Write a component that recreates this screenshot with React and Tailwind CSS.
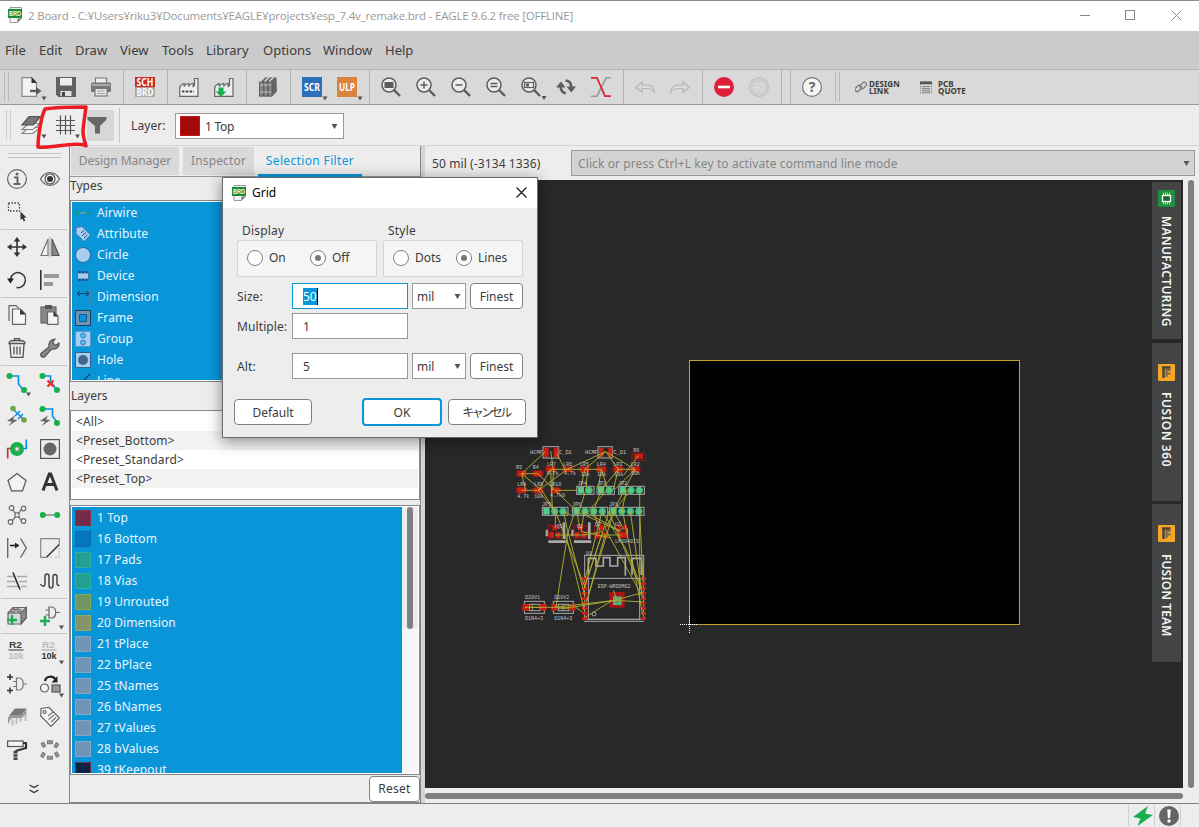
import React from "react";

const G = "#5c5c5c";

function Ico({ children, size = 20 }) {
  return (
    <svg width={size} height={size} viewBox="0 0 20 20" fill="none" stroke={G} strokeWidth="1.2" className="block shrink-0 overflow-visible">
      {children}
    </svg>
  );
}

function Arrow({ x = 21, y = 19.5 }) {
  return <path d={`M${x} ${y}h5l-2.500 4z`} transform="translate(-.5 0)" fill="#555" stroke="none" />;
}

function SheetIcon({ size = 16 }) {
  return (
    <svg width={size} height={size} viewBox="0 0 16 16" className="block shrink-0">
      <path d="M3 .5h11.500v11l-4 4H3z" fill="#f4f4f4" stroke="#999" />
      <path d="M14.500 11.500h-4v4z" fill="#777" />
      <rect x="1" y="2" width="14" height="9" fill="#1c8a3c" />
      <text x="8" y="9.300" fontSize="7.600" fontWeight="bold" fill="#e8ffe8" textAnchor="middle" textLength="12" lengthAdjust="spacingAndGlyphs" fontFamily="Liberation Sans">BRD</text>
    </svg>
  );
}

/* ---------- top toolbar ---------- */

function Lens({ children }) {
  return (
    <Ico>
      <circle cx="8" cy="8" r="7" fill="#ececec" strokeWidth="1.500" />
      <path d="M13 13l6 6" strokeWidth="2.400" />
      {children}
    </Ico>
  );
}

function Factory({ down }) {
  return (
    <Ico>
      <path d="M.7 19.300V10.500C1.500 8 3.500 7 5.200 6.500v3c.8-1.800 2.500-2.800 4.500-3v3c.8-1.800 2.500-2.800 4.500-3v3l1.300-1V1.500h3.500V19.300z" fill="#eee" stroke="#666" />
      {!down && <path d="M3 14.500h12" stroke="#444" strokeWidth="1.800" strokeDasharray="2.500 1.300" />}
      {down && <path d="M4.500 10.500h5v4h3L7 19.800 1.500 14.500h3z" fill="#18b04c" stroke="none" />}
    </Ico>
  );
}

function Badge({ fill, label }) {
  return (
    <Ico>
      <rect width="20" height="20" fill={fill} stroke="none" />
      <text x="10" y="14" fontSize="11" fontWeight="bold" fill="#fff" stroke="none" textAnchor="middle" textLength="16" lengthAdjust="spacingAndGlyphs" fontFamily="Noto Sans">{label}</text>
      <Arrow />
    </Ico>
  );
}

const TOP = [
  <Ico>
    <path d="M1 .7h9.500l5 5v13.600H1z" fill="#f2f2f2" stroke="#888" />
    <path d="M10.500 0v6h5.500z" fill="#333" stroke="none" />
    <path d="M9 14h8" strokeWidth="2.400" />
    <path d="M15 10l5.500 4-5.500 4z" fill={G} stroke="none" />
    <Arrow />
  </Ico>,
  <Ico>
    <path d="M0 0h20v20H2.500L0 17.500z" fill="#606060" stroke="none" />
    <rect x="4" y="1" width="12" height="7.500" fill="#eee" stroke="none" />
    <rect x="4.500" y="14" width="11" height="5" fill="#ddd" stroke="none" />
    <rect x="6" y="15" width="3" height="4" fill="#444" stroke="none" />
  </Ico>,
  <Ico>
    <path d="M4.500 6V1h11v5" fill="#eee" stroke="#777" />
    <rect x="0" y="5.500" width="20" height="9.500" rx="1" fill="#777" stroke="none" />
    <path d="M1 8h18" stroke="#ccc" />
    <rect x="4" y="11.500" width="12" height="7.500" fill="#eee" stroke="#777" />
    <path d="M6 14h8M6 16.500h8" stroke="#999" />
  </Ico>,
  "|",
  <Ico>
    <rect width="20" height="10.500" fill="#c92b27" stroke="none" />
    <rect y="10.500" width="20" height="9.500" fill="#aaa" stroke="none" />
    <g fill="#fff" stroke="none" fontSize="10.500" fontWeight="bold" textAnchor="middle" fontFamily="Noto Sans">
      <text x="10" y="9" textLength="17" lengthAdjust="spacingAndGlyphs">SCH</text>
      <text x="10" y="18.700" textLength="17" lengthAdjust="spacingAndGlyphs">BRD</text>
    </g>
  </Ico>,
  "|",
  <Factory />,
  <Factory down />,
  "|",
  <Ico>
    <path d="M1 5l5-4.500h12.500l.5 14-5 5H1z" fill="#666" stroke="none" />
    <path d="M1.500 5h4v14h-4zM6 5h3.800v14H6zM10.300 5h3.700v14h-3.700z" fill="#888" stroke="#555" strokeWidth=".8" />
    <path d="M2 4.500l4.500-4M6.500 4.500l4.500-4M11 4.500l4.500-4" stroke="#ddd" />
    <path d="M2 8h11M2 15h11" stroke="#bbb" />
  </Ico>,
  "|",
  <Badge fill="#2a6fbb" label="SCR" />,
  <Badge fill="#db823f" label="ULP" />,
  "|",
  <Lens><rect x="3.500" y="5" width="9" height="6" fill={G} stroke="none" /></Lens>,
  <Lens><path d="M8 4.500v7M4.500 8h7" strokeWidth="1.500" /></Lens>,
  <Lens><path d="M4.500 8h7" strokeWidth="1.500" /></Lens>,
  <Lens><path d="M4.500 6.500h7M4.500 9.500h7" strokeWidth="1.300" /></Lens>,
  <Lens>
    <rect x="3.500" y="5.500" width="9" height="5" />
    <rect x="5" y="6.500" width="3" height="3" fill={G} stroke="none" />
    <Arrow y={19} />
  </Lens>,
  <Ico>
    <path d="M4.700 9.500c0 3.500 1.800 6 5 7" strokeWidth="2.600" />
    <path d="M9.500 3.500c3.500.3 5.800 3 5.800 7" strokeWidth="2.600" />
    <path d="M0 10.500L5 4.500l4.500 6zM10.500 9.500h9.500L15.300 15.500z" fill={G} stroke="none" />
  </Ico>,
  <Ico>
    <path d="M20 .8h-5L6 19.200H0" stroke="#999" strokeWidth="1.600" />
    <path d="M0 .8h6l8 18.400h6" stroke="#d8262b" strokeWidth="1.700" />
  </Ico>,
  "|",
  <Ico><path d="M.7 10.500L7 5v3h5.500c4 0 6.500 2.500 6.500 7-1.500-2.500-3.500-3.500-6.500-3.500H7v3.500z" stroke="#b5b5b5" /></Ico>,
  <Ico><path d="M19.300 10.500L13 5v3H7.500C3.500 8 1 10.500 1 15c1.500-2.500 3.500-3.500 6.500-3.500H13v3.500z" stroke="#b5b5b5" /></Ico>,
  "|",
  <Ico>
    <circle cx="10" cy="10" r="10" fill="#dc203c" stroke="none" />
    <path d="M4 10h12" stroke="#fff" strokeWidth="2.600" />
  </Ico>,
  <Ico>
    <circle cx="10" cy="10" r="9.500" fill="#cecece" stroke="#c2c2c2" />
    <text x="10" y="14" fontSize="10.500" fill="#e4e4e4" stroke="none" textAnchor="middle" textLength="12" lengthAdjust="spacingAndGlyphs" fontFamily="Noto Sans">GO</text>
  </Ico>,
  "|",
  "|",
  <Ico>
    <circle cx="10" cy="10" r="9.400" fill="#f5f5f5" stroke="#777" />
    <text x="10" y="15" fontSize="14" fontWeight="bold" fill="#666" stroke="none" textAnchor="middle" fontFamily="Noto Sans">?</text>
  </Ico>,
];

function TopToolbar() {
  return (
    <div className="flex h-[36px] shrink-0 items-center border-y border-t-[#b5b5b5] border-b-[#999] bg-[#d9d9d9]">
      <div className="mx-[4px] h-[30px] w-[5px] shrink-0 border-x border-[#b9b9b9]" />
      {TOP.map((t, i) =>
        t === "|" ? (
          <div key={i} className="flex h-full w-[9px] shrink-0 justify-center pl-[2px]"><div className="w-px bg-[#b5b5b5]" /></div>
        ) : (
          <div key={i} className="flex w-[35px] shrink-0 justify-center">{t}</div>
        )
      )}
      <div className="ml-[6px] h-[30px] w-[5px] shrink-0 border-x border-[#b9b9b9]" />
      <div className="ml-[15px] flex items-center">
        <svg width="12" height="12" viewBox="0 0 13 13" fill="none" stroke="#777" strokeWidth="1.300" className="mr-[2px]">
          <rect x="-.5" y="5.700" width="8" height="4.600" rx="2.300" transform="rotate(-45 3.500 8)" />
          <rect x="5" y="2.500" width="8" height="4.600" rx="2.300" transform="rotate(-45 9 5)" />
        </svg>
        <div className="w-[51px] text-[8px] leading-[7px] font-bold tracking-[0.100px] text-[#3c3c3c]">DESIGN<br />LINK</div>
        <svg width="12" height="13" viewBox="0 0 13 13" className="mr-[6px]">
          <rect x=".5" y=".5" width="12" height="12" fill="#ddd" stroke="#aaa" />
          <rect width="13" height="3" fill="#555" />
          <path d="M2 5.500h9M2 7.500h9M2 9.500h9M2 11.500h9" stroke="#777" />
        </svg>
        <div className="text-[8px] leading-[7px] font-bold tracking-[0.050px] text-[#3c3c3c]">PCB<br />QUOTE</div>
      </div>
    </div>
  );
}

function ParamToolbar() {
  return (
    <div className="flex h-[41px] shrink-0 items-center border-b border-[#d4d4d4] bg-[#ededed]">
      <div className="ml-[6px] h-[30px] w-[5px] shrink-0 border-x border-[#cdcdcd]" />
      <div className="flex w-[40px] justify-center">
        <Ico>
          <path d="M1 18.500l7-6h11l-7 6z" fill="#f4f4f4" stroke="#888" />
          <path d="M1 14.500l7-6h11l-7 6z" fill="#f4f4f4" stroke="#888" />
          <path d="M1 10L8 1.500h11.500L12.500 10z" fill="#777" stroke="#555" />
          <Arrow x={21} />
        </Ico>
      </div>
      <div className="flex w-[28px] justify-center">
        <Ico>
          <path d="M5.500 .5v19M10.500 .5v19M15.500 .5v19M1 5.500h19M1 10.500h19M1 15.500h19" stroke="#555" />
          <Arrow x={20.500} />
        </Ico>
      </div>
      <div className="ml-[8px] flex h-[31px] w-[27px] justify-center rounded-[2px] bg-[#d7d7d7] pt-[6px] pr-[6px]">
        <Ico><path d="M-.5 1h19v2.500L12 10v7.500H7V10L-.5 3.500z" fill="#666" stroke="none" /></Ico>
      </div>
      <div className="mr-[4px] ml-[5px] h-[35px] w-px bg-[#c6c6c6]" />
      <span className="ml-[7px] w-[44px] pt-[2px] tracking-[0.100px]">Layer:</span>
      <div className="flex h-[26px] w-[169px] items-center border border-[#999] bg-white pr-[5px] pl-[4px] translate-y-px">
        <div className="h-[20px] w-[20px] border border-[#c81414] bg-[#a00a0a]" />
        <span className="ml-[5px] flex-1 pt-px tracking-[-0.300px]">1 Top</span>
        <Caret />
      </div>
    </div>
  );
}

function Caret() {
  return <svg width="7" height="5" viewBox="0 0 7 5" className="block shrink-0"><path d="M.5 0h6L3.500 5z" fill="#555" /></svg>;
}

/* ---------- tool palette ---------- */

const GR = "#18b04c";
const BL = "#0a8fe6";
const bolt = <path d="M8 9.500L0 15l5 .5-3.500 4.500L10.500 14l-4.500-.5z" fill="#666" stroke="none" />;
const Dot = ({ x, y, r = 3, f = GR }) => <circle cx={x} cy={y} r={r} fill={f} stroke="none" />;

const PALETTE = [
  [
    <Ico><circle cx="10" cy="10" r="9.400" stroke="#666" /><path d="M7 8.500h3.500v6.500M6.500 15h7" strokeWidth="2" stroke="#666" /><circle cx="10" cy="5" r="1.500" fill="#666" stroke="none" /></Ico>,
    <Ico><path d="M.5 10C5 1.500 15 1.500 19.500 10 15 18.500 5 18.500.5 10z" stroke="#666" /><circle cx="10" cy="10" r="5" fill="#f5f5f5" stroke="#555" /><circle cx="10" cy="10" r="3" fill="#333" stroke="none" /></Ico>,
  ],
  [
    <Ico><rect x="1.500" y="1" width="11" height="8" stroke="#444" strokeDasharray="1.500 1.500" strokeWidth="1.300" /><path d="M13.500 9.500v8.500l2-1.500 1.200 3 1.500-.7-1.300-3 2.600-.3z" fill="#333" stroke="none" /></Ico>,
    null,
  ],
  "-",
  [
    <Ico><path d="M10 3v14M3 10h14" stroke="#333" strokeWidth="1.600" /><path d="M10 0l3.300 4.500H6.700zM10 20l3.300-4.500H6.700zM0 10l4.500-3.300v6.600zM20 10l-4.500-3.300v6.600z" fill="#333" stroke="none" /></Ico>,
    <Ico><path d="M8 2v16.500H1z" fill="#f5f5f5" stroke="#777" /><path d="M12 2v16.500h7z" fill="#888" stroke="#555" /><path d="M10 0v20" stroke="#999" strokeWidth=".8" /></Ico>,
  ],
  [
    <Ico><path d="M3.500 9a7.500 7.500 0 1 1 6 8.500" stroke="#333" strokeWidth="1.500" /><path d="M0 8.500h7L3.500 13.500z" fill="#222" stroke="none" /></Ico>,
    <Ico><path d="M.8 0v20" stroke="#333" strokeWidth="1.600" /><path d="M4 6h15M4 14h9" stroke="#999" strokeWidth="4" /></Ico>,
  ],
  "-",
  [
    <Ico><path d="M2 16V.7h7l3 3" stroke="#666" /><path d="M5.500 4h8l5 5v10.300h-13z" fill="#f5f5f5" stroke="#666" /><path d="M13 4v5.500h5.500z" fill="#333" stroke="none" /></Ico>,
    <Ico><rect x="1" y="2" width="15" height="16" fill="#888" stroke="#666" /><rect x="5" y="0" width="7" height="4" fill="#555" stroke="none" /><path d="M7.500 7h6.500l4 4v8.300H7.500z" fill="#f5f5f5" stroke="#666" /><path d="M13.500 6.500v5H18z" fill="#333" stroke="none" /></Ico>,
  ],
  [
    <Ico><path d="M3 6l1 13.300h12L17 6M2 5.500c0-3 2-3 8-3s8 0 8 3zM7.500 2V.7h5V2M7 8.500v8M10 8.500v8M13 8.500v8" stroke="#555" strokeWidth="1.300" /></Ico>,
    <Ico><path d="M1.500 18.500c-1.500-1.500-1-2.500 0-3.500L9 9C8 5 10.500 1 15 1l-2.500 3.500 3 3L19 5c.5 4.500-3.500 7-7.500 6L5 18.500c-1 1-2.500 1-3.500 0z" fill="#888" stroke="#555" /></Ico>,
  ],
  "-",
  [
    <Ico><path d="M2.500 3h9v8l5 6" stroke={BL} strokeWidth="1.700" /><Dot x="2.500" y="3" /><Dot x="17" y="17" /><Arrow x={19.500} y={19.500} /></Ico>,
    <Ico><path d="M2.500 3h8v5l6 9" stroke={BL} strokeWidth="1.700" /><path d="M7.500 7.500l6 6M13.500 7.500l-6 6" stroke="#f02828" strokeWidth="2.200" /><Dot x="2.500" y="3" /><Dot x="17" y="17" /></Ico>,
  ],
  [
    <Ico><path d="M6 3l3 3M14 11l3 3" stroke={BL} strokeWidth="1.700" /><path d="M8 10l5-5M11 13l5-5M9 6l6 6" stroke={BL} strokeWidth="1.500" /><Dot x="6" y="2.500" r="2.800" f="#6da64f" /><Dot x="17" y="14" r="2.800" f="#6da64f" />{bolt}</Ico>,
    <Ico><path d="M2.500 3h10v7l5 7" stroke={BL} strokeWidth="1.700" /><Dot x="2.500" y="3" /><Dot x="17" y="17" />{bolt}</Ico>,
  ],
  [
    <Ico><path d="M.7 19.500V9.500H5" stroke="#c43636" strokeWidth="1.700" /><path d="M19.300.5v9H14" stroke={BL} strokeWidth="1.700" /><circle cx="10" cy="10" r="7" fill={GR} stroke="none" /><circle cx="10" cy="10" r="2" fill="#eee" stroke="#9a8" /></Ico>,
    <Ico><rect x=".6" y=".6" width="18.800" height="18.800" stroke="#555" /><circle cx="10" cy="10" r="6.500" fill="#666" stroke="none" /></Ico>,
  ],
  [
    <Ico><path d="M10 1.500l9 7-3.500 10.300h-11L1 8.500z" stroke="#555" fill="#f3f3f3" /></Ico>,
    <Ico><path d="M3 18.500L9.300 2h1.400L17 18.500M5.500 12.500h9" stroke="#333" strokeWidth="3" /></Ico>,
  ],
  [
    <Ico><path d="M5 4l10 12M15 4L5 16" stroke="#777" /><g fill="#f5f5f5" stroke="#666"><circle cx="4.500" cy="3" r="2.300" /><circle cx="16.500" cy="3.500" r="2.300" /><circle cx="3.500" cy="17" r="2.300" /><circle cx="16.500" cy="16" r="2.300" /><rect x="8" y="8" width="4" height="4" /></g></Ico>,
    <Ico><path d="M3 10h14" stroke="#999" strokeWidth="1.800" /><Dot x="2.800" y="10" /><Dot x="17.200" y="10" /></Ico>,
  ],
  [
    <Ico><path d="M.7 0v20M13.500.5L19.300 10l-5.800 9.500" stroke="#666" strokeWidth="1.400" /><path d="M3 7.500h6" stroke="#222" strokeWidth="1.600" /><path d="M8 4.500l4.500 3-4.500 3z" fill="#222" stroke="none" /></Ico>,
    <Ico><path d="M6.500 19.300H.7V.7h18.600v5.800" stroke="#888" /><path d="M6.500 19.300L19.300 6.500" stroke="#333" strokeWidth="1.500" /><path d="M10 19.300h2M15 19.300h4.300M19.300 10v9" stroke="#bbb" strokeDasharray="2 1" /></Ico>,
  ],
  [
    <Ico><path d="M0 5.500h7M10 5.500h10M0 10.500h9M12 10.500h8M0 15.500h11M14 15.500h6" stroke="#aaa" strokeWidth="1.400" /><path d="M6 1.500l7 17" stroke="#222" strokeWidth="1.500" /></Ico>,
    <Ico><path d="M.5 13c2 3.500 4.500 3 4.500-1V5.500C5 2 9 2 9 5.500V14c0 4 4 4 4 0V6c0-3.500 4-3.500 4 0v6c0 2 1 3 2.500 2" stroke="#444" strokeWidth="1.500" /></Ico>,
  ],
  "-",
  [
    <Ico><path d="M1 7l5-5.500h13.300v10L14 18H1z" fill="#d8d8d8" stroke="#666" /><path d="M14 7v11l5.300-6V1.500z" fill="#888" stroke="#666" /><path d="M1 7h13" /><g fill="#eee" stroke="#666"><ellipse cx="6" cy="4.500" rx="2" ry="1.200" /><ellipse cx="12" cy="4.500" rx="2" ry="1.200" /><ellipse cx="9" cy="2.500" rx="2" ry="1" /></g><path d="M5 9v10M0 14h10" stroke={GR} strokeWidth="2.400" /></Ico>,
    <Ico><path d="M9 1v11h3c5-1 5-10 0-11zM5.500 4H9M5.500 9H9M16 6.500h4" stroke="#666" /><path d="M5 10v10M0 15h10" stroke={GR} strokeWidth="2.400" /><Arrow x={19.500} y={19.500} /></Ico>,
  ],
  "-",
  [
    <Ico><g stroke="none" fontFamily="Liberation Sans" fontWeight="bold" fontSize="9" textAnchor="middle"><text x="8.500" y="7" fill="#444" textLength="13" lengthAdjust="spacingAndGlyphs">R2</text><text x="9" y="17.500" fill="#bbb" textLength="15" lengthAdjust="spacingAndGlyphs">10k</text></g><path d="M1.500 9h15" stroke="#555" /></Ico>,
    <Ico><g stroke="none" fontFamily="Liberation Sans" fontWeight="bold" fontSize="9" textAnchor="middle"><text x="8.500" y="7" fill="#bbb" textLength="13" lengthAdjust="spacingAndGlyphs">R2</text><text x="9" y="17.500" fill="#333" textLength="15" lengthAdjust="spacingAndGlyphs">10k</text></g><path d="M1.500 9h15" stroke="#aaa" /><Arrow x={19.500} y={19.500} /></Ico>,
  ],
  [
    <Ico><path d="M9.500 4v12h3c5-1 5-11 0-12zM6 7.500h3.500M6 12.500h3.500M17 10h3" stroke="#777" /><path d="M3 0v6M0 3h6M3 13.500v6M0 16.500h6" stroke="#333" strokeWidth="1.500" /></Ico>,
    <Ico><path d="M5 7c1-5 8-6 11-1" stroke="#222" strokeWidth="2.200" /><path d="M17.500 2v6.500h-6z" fill="#222" stroke="none" /><circle cx="4.500" cy="14" r="4" fill="#f5f5f5" /><rect x="12" y="11" width="8" height="7" fill="#999" stroke="#555" /><Arrow x={19.500} y={19.500} /></Ico>,
  ],
  [
    <Ico><path d="M3 12l5-4M5.500 12.500v6M9.500 10v7M13.500 9v6M18.500 5v9" stroke="#bbb" strokeWidth="2" /><path d="M2.500 8L8 1.500h11.500L14.500 8z" fill="#777" stroke="none" /><path d="M2.500 8h12l5-6.500v4.500l-4.500 5H4L1 17.500V11z" fill="#999" stroke="none" /></Ico>,
    <Ico><path d="M1 1.500l8-1L19.300 11 11 19.300.7 9z" fill="#f5f5f5" stroke="#666" /><circle cx="4.500" cy="5" r="1.500" /><path d="M8 9l5-4M8.500 12.500L14 8M11 15l5-4.500" stroke="#777" /></Ico>,
  ],
  [
    <Ico><rect x=".6" y="1" width="15.500" height="5.500" fill="#f5f5f5" stroke="#555" /><path d="M16 3h3v5L8.500 11" stroke="#333" strokeWidth="2.200" /><path d="M8.500 11v9" stroke="#444" strokeWidth="4" strokeDasharray="2.500 .7" /></Ico>,
    <Ico><g fill="#999" stroke="#666" strokeWidth=".8"><rect x="7.500" y=".8" width="5" height="3" /><rect x="7.500" y="16.200" width="5" height="3" /><rect x="14" y="3.500" width="4.500" height="3" transform="rotate(-60 16.500 5)" /><rect x="1" y="3.500" width="4.500" height="3" transform="rotate(60 3.500 5)" /><rect x="14" y="13" width="4.500" height="3" transform="rotate(60 16.500 15)" /><rect x="1" y="13" width="4.500" height="3" transform="rotate(-60 3.500 15)" /></g></Ico>,
  ],
];

function Palette() {
  return (
    <div className="flex w-[69px] shrink-0 flex-col bg-[#ededed]">
      <div className="mx-[8px] mt-[7px] mb-[4px] h-[5px] border-y border-[#c4c4c4]" />
      {PALETTE.map((r, i) =>
        r === "-" ? (
          <div key={i} className="mr-[2px] ml-px h-[2px] shrink-0 border-b border-[#c6c6c6]" />
        ) : (
          <div key={i} className="flex h-[33px] shrink-0 items-center">
            <div className="flex w-[33px] justify-center">{r[0]}</div>
            <div className="flex w-[33px] justify-center">{r[1]}</div>
          </div>
        )
      )}
      <div className="mt-[18px] flex justify-center pr-[2px]">
        <svg width="10" height="10" viewBox="0 0 10 10" fill="none" stroke="#333" strokeWidth="1.400"><path d="M.5 1L5 3.500 9.500 1M.5 6L5 8.500 9.500 6" /></svg>
      </div>
    </div>
  );
}

/* ---------- selection filter panel ---------- */

const LB = "#a9cdf0";
const DK = "#17507c";
const TYPES = [
  ["Airwire", <path d="M3 8h10" stroke="#6f9ab0" strokeWidth="1.500" />, <g><circle cx="2.500" cy="8" r="2" fill="#109a76" /><circle cx="13.500" cy="8" r="2" fill="#109a76" /></g>],
  ["Attribute", <path d="M1 1.500l6-1L15.500 9 9 15.500 1 7.500z" fill={LB} stroke="#3a76a8" />, <path d="M6 7l3-2.500M7 10l4-3.500M9 12l3.500-3" stroke={DK} />],
  ["Circle", <circle cx="8" cy="8" r="7.500" fill={LB} stroke="#2a6596" />],
  ["Device", <path d="M2.500 5h11v6h-11z" fill={LB} stroke="#3a76a8" />, <path d="M3.500 4h2M7 4h2M10.500 4h2M3.500 12h2M7 12h2M10.500 12h2" stroke={DK} strokeWidth="2" />],
  ["Dimension", <path d="M.5 0v16M15.500 0v16" stroke="#4c84b0" />, <path d="M2 4.500h12M5 2L2 4.500 5 7M11 2l3 2.500L11 7" stroke="#0d3c63" fill="none" />],
  ["Frame", <path d="M.5.5h15v15H.5z" fill="#6d93b8" stroke="#1c3f60" />, <path d="M4.500 4.500h7v7h-7z" fill="#0896d9" stroke="#1c5a88" />],
  ["Group", <path d="M.5.5h15v15H.5z" fill={LB} stroke="#4f8fc0" strokeDasharray="2 1" />, <g fill="#5fb4ea" stroke="#2c8ac8"><circle cx="8" cy="4.500" r="2.500" /><circle cx="8" cy="11.500" r="2.500" /></g>],
  ["Hole", <path d="M.5.5h15v15H.5z" fill={LB} stroke="#2a6596" />, <circle cx="8" cy="8" r="5" fill="#44668c" />],
  ["Line", <path d="M15 1L1 15" stroke="#0d3c63" strokeWidth="1.300" />],
];

const LAYERS = [
  ["1 Top", "bg-[#722c4a] border-[#8a3346]"],
  ["16 Bottom", "bg-[#0477ba] border-[#0a69b0]"],
  ["17 Pads", "bg-[#229f93] border-[#2db2a0]"],
  ["18 Vias", "bg-[#229f93] border-[#2db2a0]"],
  ["19 Unrouted", "bg-[#6f9660] border-[#86ac58]"],
  ["20 Dimension", "bg-[#829468] border-[#9ca860]"],
  ["21 tPlace", "bg-[#7094b5] border-[#84a6c4]"],
  ["22 bPlace", "bg-[#7094b5] border-[#84a6c4]"],
  ["25 tNames", "bg-[#7094b5] border-[#84a6c4]"],
  ["26 bNames", "bg-[#7094b5] border-[#84a6c4]"],
  ["27 tValues", "bg-[#7094b5] border-[#84a6c4]"],
  ["28 bValues", "bg-[#7094b5] border-[#84a6c4]"],
  ["39 tKeepout", "bg-[#0c2444] border-[#722c4a]"],
];

function Panel() {
  return (
    <div className="flex w-[352px] shrink-0 flex-col border-x border-[#84878d] bg-[#ededed]">
      <div className="flex h-[31px] shrink-0 gap-[4px] border-b border-[#999] pl-px text-[#858585]">
        <div className="mt-px flex h-[28px] w-[108px] items-center justify-center bg-[#d9d9d9] tracking-[-0.050px]">Design Manager</div>
        <div className="mt-px flex h-[28px] w-[71px] items-center justify-center bg-[#d9d9d9] tracking-[0.150px]">Inspector</div>
        <div className="flex h-[31px] w-[104px] items-center justify-center border-b-[3px] border-[#0896d9] pt-px tracking-[0.350px] text-[#0896d9]">Selection Filter</div>
      </div>
      <div className="h-[23px] shrink-0 leading-[18px] text-[#3c3c3c]">Types</div>
      <div className="flex h-[182px] w-[350px] shrink-0 overflow-hidden border border-[#84878d] bg-white p-px">
        <div className="flex w-[330px] flex-col overflow-hidden bg-[#0896d9] text-[#e8f5ff]">
          {TYPES.map(([n, a, b]) => (
            <div key={n} className="flex h-[21px] shrink-0 items-center gap-[6px] pl-[3px] tracking-[0.100px]">
              <svg width="16" height="16" viewBox="0 0 16 16" fill="none" className="block">{a}{b}</svg>
              {n}
            </div>
          ))}
        </div>
      </div>
      <div className="h-[28px] shrink-0 pl-px leading-[27px] text-[#3c3c3c]">Layers</div>
      <div className="h-[90px] w-[350px] shrink-0 border border-[#84878d] bg-white p-px text-[#3c3c3c]">
        {["<All>", "<Preset_Bottom>", "<Preset_Standard>", "<Preset_Top>"].map((t, i) => (
          <div key={t} className={`h-[19px] pl-[4px] leading-[19px] tracking-[0.120px] ${i % 2 ? "bg-[#f3f3f3]" : ""}`}>{t}</div>
        ))}
      </div>
      <div className="mt-[5px] flex h-[270px] w-[350px] shrink-0 border border-[#84878d] bg-white p-px">
        <div className="flex w-[330px] flex-col overflow-hidden bg-[#0896d9] text-[#e8f5ff]">
          {LAYERS.map(([n, c]) => (
            <div key={n} className="flex h-[21px] shrink-0 items-center gap-[6px] pl-[3px] tracking-[0.100px]">
              <div className={`h-[16px] w-[16px] border ${c}`} />
              {n}
            </div>
          ))}
        </div>
        <div className="flex flex-1 flex-col items-center bg-[#f6f6f6]">
          <div className="flex h-[122px] w-full justify-center bg-[#ededed]"><div className="mr-px w-[6px] rounded-full bg-[#808080]" /></div>
        </div>
      </div>
      <div className="flex flex-1 items-end justify-end border-b border-[#84878d]">
        <div className="flex h-[26px] w-[51px] items-center justify-center rounded-[4px] border border-[#808080] bg-white tracking-[0.250px] text-[#3c3c3c]">Reset</div>
      </div>
    </div>
  );
}

/* ---------- board canvas ---------- */

function Pads({ x, y, n, gap = 25 }) {
  const w = n * gap + 2;
  return (
    <g>
      <rect x={x} y={y - 12} width={w} height="24" stroke="#aaa" strokeWidth="3" />
      {Array.from({ length: n }, (_, i) =>
        i === 0 ? (
          <rect key={i} x={x + 3} y={y - 10} width="19" height="20" fill="#48c890" />
        ) : (
          <circle key={i} cx={x + 12 + i * gap} cy={y} r="11" fill="#3cbc84" />
        )
      )}
      {Array.from({ length: n }, (_, i) => <circle key={i} cx={x + 12 + i * gap} cy={y} r="4" stroke="#8bd87a" strokeWidth="2" />)}
    </g>
  );
}

const SMD = [[65, 116], [114, 116], [152, 103], [202, 103], [254, 103], [304, 103], [355, 103], [405, 103], [65, 166], [115, 166], [166, 166]];
const LABELS = [
  [48, 102, "R3"], [98, 102, "R4"], [141, 93, "LR7"], [190, 93, "LR6"], [240, 93, "LR5"], [290, 93, "LR4"], [340, 93, "LR3"], [392, 93, "LR2"],
  [52, 154, "LR8"], [103, 154, "LR9"], [148, 154, "LR10"], [52, 188, "4.7k"], [103, 188, "10k"], [150, 186, "4.7k0"], [140, 121, "4.7k"], [192, 121, "4.7k"], [242, 122, "10k"], [292, 122, "10k"], [343, 122, "10k"], [393, 120, "10k"],
  [400, 50, "R6"], [233, 150, "JP4"], [291, 150, "JP3"], [355, 150, "JP2"], [126, 214, "JP5"], [217, 214, "JP6"], [328, 214, "JP1"],
  [170, 278, "Q1"], [230, 278, "Q2"], [284, 272, "Q3"], [345, 274, "U2"], [345, 325, "LM3940IS"], [258, 360, "U1"], [293, 458, "ESP-WROOM02"],
  [75, 493, "D20V1"], [163, 493, "D20V2"], [75, 556, "D1N4+3"], [163, 556, "D1N4+3"],
];

function BoardDrawing() {
  return (
    <svg width="758" height="608" viewBox="0 0 758 608" fill="none" className="block">
      <rect x="264.500" y="180.500" width="330" height="264" fill="#000" stroke="#c2a02e" />
      <path d="M255 444.500h18M264.500 436v18" stroke="#fff" strokeDasharray="1 1" />
      <g transform="translate(75 255) scale(.33333)" strokeWidth="3">
        <g stroke="#aaa">
          <rect x="129" y="35" width="47" height="34" /><rect x="294" y="35" width="43" height="34" />
          <rect x="254" y="361" width="177" height="192" /><path d="M254 430h177M252 559h180" />
          <path d="M265 430v123h154V430" />
          <path d="M265 420v-50h23v23h22v-25h20v25h23v-25h23v54M396 420v-50h28v50" strokeWidth="5" />
          <rect x="73" y="499" width="60" height="36" /><rect x="160" y="499" width="60" height="36" />
          <rect x="88" y="508" width="32" height="19" /><rect x="175" y="508" width="32" height="19" />
          <path d="M145 320h52M222 320h52" strokeWidth="8" />
          <path d="M141 284v20M218 284v20M192 262v50M268 262v50" strokeWidth="8" />
          <rect x="355" y="282" width="27" height="17" />
          <circle cx="282" cy="537" r="6" />
        </g>
        <Pads x={230} y={166} n={2} /><Pads x={291} y={166} n={2} /><Pads x={356} y={166} n={3} />
        <Pads x={127} y={229} n={3} /><Pads x={217} y={229} n={4} gap={26} /><Pads x={328} y={229} n={4} gap={25.500} />
        <g fill="#c81e14">
          {SMD.map(([x, y]) => <g key={`${x}-${y}`}><rect x={x - 18} y={y - 7} width="36" height="14" fill="#a01414" opacity=".6" /><rect x={x - 13} y={y - 9} width="26" height="18" /></g>)}
          <rect x="132" y="38" width="14" height="28" /><rect x="161" y="38" width="14" height="28" />
          <rect x="297" y="38" width="14" height="28" /><rect x="325" y="38" width="12" height="28" />
          <rect x="396" y="55" width="40" height="21" fill="none" stroke="#a01414" /><rect x="403" y="57" width="26" height="14" />
          {[145, 222, 283].map((x) => <g key={x}><rect x={x} y="272" width="39" height="37" stroke="#a01414" fill="none" /><rect x={x + 12} y="271" width="15" height="15" /><rect x={x + 3} y="291" width="14" height="17" /><rect x={x + 22} y="291" width="14" height="17" /></g>)}
          <rect x="354" y="270" width="10" height="16" /><rect x="371" y="270" width="10" height="16" /><rect x="354" y="290" width="27" height="19" />
          <rect x="67" y="507" width="20" height="20" /><rect x="120" y="507" width="20" height="20" /><rect x="154" y="507" width="20" height="20" /><rect x="207" y="507" width="20" height="20" />
          {Array.from({ length: 9 }, (_, i) => <g key={i}><rect x="246" y={426 + i * 15} width="15" height="9" /><rect x="423" y={426 + i * 15} width="15" height="9" /></g>)}
          <rect x="328" y="471" width="46" height="47" fill="#a81414" /><rect x="339" y="484" width="26" height="26" fill="#50b080" />
          <path d="M346 496h12M352 490v12" stroke="#c81414" />
        </g>
        <g stroke="#b0ad30" strokeWidth="2.800">
          <path d="M136 50L65 116h50M152 48L160 103 158 166M170 55l25 48h50M152 103h50M202 103L317 50M317 50L254 103h50M317 50l38 53h50M317 50L405 103M415 62l-45 60M254 103l-12 60M304 103l-10 60M355 103l-15 60M405 103l-60 60M65 116l12 50M65 116l60 50 40 60M114 116l50 50M152 103L115 166 65 166M152 103l5 120M202 103L115 166M166 166h64M166 166L230 229M115 166l50 63M190 229l30 15-20 60M263 103l-5 60-20 66M304 103l20 60-60 66M355 103l-50 60-25 66M405 103l-65 126M391 166l-50 63M380 166l-15 63M419 166v300" />
          <path d="M166 229v50M166 229l90 230M190 229l14 62-36 225M204 290l50 190M200 310l54 220M230 229l10 50M253 229l-10 60 90 20M280 229l20 60M306 229l-50 200M306 229l70 110 50 120M230 229l130 60M328 229l-75 230M340 229l30 50M341 229L260 500M391 229l35 250M368 229l60 310M419 229l10 210M165 300h90l50-10M305 300l-50 150M315 300l-55 200M305 300h60M345 229L315 280 430 490M326 229l100 240M253 229l110 60" />
          <path d="M75 517h140L345 496 430 472M227 517l20 14M165 517L345 496l85 5M254 548l80-50M352 496l-12-30M97 508v18M88 517h32M190 508v18M175 520h32" />
        </g>
        <g fill="#c4c4c4" fontFamily="Liberation Mono" fontSize="15">
          {LABELS.map(([x, y, t], i) => <text key={i} x={x} y={y}>{t}</text>)}
          <text x="90" y="57" fontSize="16">HCMF</text><text x="177" y="57" fontSize="16">C_D1</text>
          <text x="255" y="57" fontSize="16">HCMF</text><text x="340" y="57" fontSize="16">C_D1</text>
        </g>
      </g>
    </svg>
  );
}

function FusionIcon() {
  return (
    <svg width="17" height="17" viewBox="0 0 17 17" className="block shrink-0">
      <rect width="17" height="17" rx="1" fill="#f5a623" />
      <path d="M4 3.500h8.500M5.500 3v11" stroke="#4a4235" strokeWidth="2.400" fill="none" />
      <path d="M8.500 13V6h4M9 9.500h3.500" stroke="#6e675a" strokeWidth="2" fill="none" />
    </svg>
  );
}

function SideTab({ icon, label, cls }) {
  return (
    <div className={`flex w-[29px] flex-col items-center bg-[#444] ${cls}`}>
      {icon}
      <span className="mr-px text-[12px] leading-[16px] font-semibold text-[#f4f4f4] [writing-mode:vertical-rl]">{label}</span>
    </div>
  );
}

function CanvasArea() {
  return (
    <div className="flex min-w-0 flex-1 flex-col bg-[#ededed]">
      <div className="flex h-[34px] shrink-0 items-center">
        <span className="w-[146px] pt-[2px] pl-[7px] tracking-[0.100px]">50 mil (-3134 1336)</span>
        <div className="flex h-[26px] w-[624px] items-center justify-between border border-[#999] bg-[#d3d3d3] pt-px pr-[4px] pl-[6px] tracking-[0.100px] text-[#858585]">
          Click or press Ctrl+L key to activate command line mode
          <Caret />
        </div>
      </div>
      <div className="flex h-[608px] shrink-0">
        <div className="relative w-[758px] overflow-hidden bg-[#282828]">
          <BoardDrawing />
          <div className="absolute top-[2px] right-[2px] flex flex-col gap-[4px]">
            <SideTab
              cls="h-[157px] pt-[8px] gap-[9px] tracking-[0.400px]"
              label="MANUFACTURING"
              icon={
                <svg width="17" height="17" viewBox="0 0 17 17" className="block shrink-0">
                  <rect width="17" height="17" rx="1" fill="#1f8f42" />
                  <path d="M5.500 2.500v12M7.500 2.500v12M9.500 2.500v12M11.500 2.500v12" stroke="#e6d829" strokeWidth="1.100" />
                  <rect x="4.500" y="5.500" width="8" height="6" fill="#176a30" stroke="#fff" strokeWidth="1.300" />
                </svg>
              }
            />
            <SideTab cls="h-[158px] pt-[21px] gap-[11px] tracking-[0.600px]" label="FUSION 360" icon={<FusionIcon />} />
            <SideTab cls="-mt-px h-[158px] pt-[21px] gap-[12px] tracking-[0.100px]" label="FUSION TEAM" icon={<FusionIcon />} />
          </div>
        </div>
        <div className="ml-[5px] w-[6px] rounded-full bg-[#808080]" />
      </div>
      <div className="mt-[5px] h-[6px] w-[758px] rounded-full bg-[#808080]" />
    </div>
  );
}

/* ---------- grid dialog ---------- */

function Radio({ label, on, cls }) {
  return (
    <div className={`flex items-center gap-[6px] pb-px ${cls}`}>
      <div className="flex h-[16px] w-[16px] items-center justify-center rounded-full border border-[#808080] bg-white">
        {on && <div className="h-[6px] w-[6px] rounded-full bg-[#777]" />}
      </div>
      {label}
    </div>
  );
}

function UnitRow({ label, value, selected, unit, cls }) {
  return (
    <div className={`flex h-[26px] items-center ${cls}`}>
      <span className="w-[55px] pt-[2px] tracking-[0.100px]">{label}</span>
      <div className={`flex h-[26px] w-[116px] items-center border bg-white pl-[10px] ${selected ? "border-[#0896d9]" : "border-[#999]"}`}>
        {selected ? <span className="border-r border-black bg-[#0896d9] leading-[17px] text-white">{value}</span> : <span className="pt-[2px]">{value}</span>}
      </div>
      {unit && (
        <>
          <div className="ml-[4px] flex h-[26px] w-[54px] items-center justify-between border border-[#999] bg-white px-[4px] pt-px">mil<Caret /></div>
          <Button cls="ml-[4px] h-[26px] w-[53px] border border-[#808080]">Finest</Button>
        </>
      )}
    </div>
  );
}

function Button({ cls, children }) {
  return <div className={`flex shrink-0 items-center justify-center rounded-[4px] bg-white pt-px ${cls}`}>{children}</div>;
}

function GridDialog() {
  return (
    <div className="absolute top-[177px] left-[222px] h-[261px] w-[316px] border border-[#6a6a6a] bg-[#ededed] shadow-[0_3px_14px_rgba(0,0,0,0.450)]">
      <div className="flex h-[30px] items-center bg-white pr-[10px] pb-px pl-[8px] text-black">
        <SheetIcon />
        <span className="ml-[5px] flex-1 pt-px text-[12px]">Grid</span>
        <svg width="11" height="11" viewBox="0 0 11 11" stroke="#111" strokeWidth="1.100"><path d="M.5.500l10 10M10.500.500l-10 10" /></svg>
      </div>
      <div className="flex gap-[6px] px-[14px] pt-[14px]">
        <div className="w-[140px]">
          <div className="h-[18px] pl-[5px] leading-[18px] tracking-[0.200px]">Display</div>
          <div className="flex h-[37px] items-center rounded-[2px] border border-[#d4d4d4] bg-[#f5f5f5] pl-[9px]">
            <Radio label="On" cls="w-[63px]" />
            <Radio label="Off" on cls="" />
          </div>
        </div>
        <div className="w-[140px]">
          <div className="h-[18px] pl-[5px] leading-[18px] tracking-[0.200px]">Style</div>
          <div className="flex h-[37px] items-center rounded-[2px] border border-[#d4d4d4] bg-[#f5f5f5] pl-[9px]">
            <Radio label="Dots" cls="w-[63px]" />
            <Radio label="Lines" on cls="" />
          </div>
        </div>
      </div>
      <div className="flex flex-col pt-[6px] pl-[14px]">
        <UnitRow label="Size:" value="50" selected unit cls="" />
        <UnitRow label="Multiple:" value="1" cls="mt-[4px]" />
        <UnitRow label="Alt:" value="5" unit cls="mt-[14px]" />
      </div>
      <div className="flex items-center pt-[19px] pl-[11px]">
        <Button cls="h-[26px] w-[78px] border border-[#808080]">Default</Button>
        <Button cls="ml-[50px] h-[28px] w-[80px] border-2 border-[#0896d9]">OK</Button>
        <Button cls="ml-[6px] h-[26px] w-[78px] border border-[#808080] tracking-[-2.500px] pr-[2px]">キャンセル</Button>
      </div>
    </div>
  );
}

export default function App() {
  return (
    <div className="relative flex h-[827px] w-[1199px] flex-col overflow-hidden bg-[#ededed] text-[12px] leading-none whitespace-nowrap text-[#3c3c3c] font-['Noto_Sans','Noto_Sans_CJK_JP',sans-serif]">
      <div className="flex h-[31px] shrink-0 items-center border-t border-[#8c8c8c] bg-white pb-[2px] pl-[7px]">
        <SheetIcon />
        <span className="ml-[5px] flex-1 pt-px text-[11.500px] leading-[16px] tracking-[-0.200px] text-[#999] font-['Open_Sans','Noto_Sans_CJK_JP',sans-serif]">2 Board - C:¥Users¥riku3¥Documents¥EAGLE¥projects¥esp_7.4v_remake.brd - EAGLE 9.6.2 free [OFFLINE]</span>
        <svg width="102" height="11" viewBox="0 0 102 11" fill="none" stroke="#888" className="mr-[17px]">
          <path d="M0 5.500h10M91.500.500l10 10M101.500.500l-10 10" />
          <rect x="45.500" y=".5" width="9" height="9" />
        </svg>
      </div>
      <div className="flex h-[38px] shrink-0 items-center bg-[#cbcbcb] pl-[5px] text-[13px]">
        <span className="w-[34px]">File</span>
        <span className="w-[36px]">Edit</span>
        <span className="w-[45px]">Draw</span>
        <span className="w-[42px]">View</span>
        <span className="w-[44px]">Tools</span>
        <span className="w-[57px]">Library</span>
        <span className="w-[60px]">Options</span>
        <span className="w-[62px]">Window</span>
        <span>Help</span>
      </div>
      <TopToolbar />
      <ParamToolbar />
      <div className="flex h-[658px] shrink-0 border-b border-[#808080]">
        <Palette />
        <Panel />
        <div className="w-[4px] shrink-0 bg-[#d4d4d4]" />
        <CanvasArea />
      </div>
      <div className="flex flex-1 items-center justify-end pr-[18px]">
        <div className="flex h-[21px] w-[27px] items-center justify-center border-x border-[#d0d0d0] pl-[3px]">
          <svg width="20" height="20" viewBox="0 0 20 20" className="block"><path d="M15 0L0 11l7.500 1.500L4.500 20 20 9l-8-1.500z" fill="#18b04c" /></svg>
        </div>
        <div className="flex h-[21px] w-[26px] items-center justify-end border-r border-[#d0d0d0] pr-px">
          <svg width="20" height="20" viewBox="0 0 20 20" className="block"><circle cx="10" cy="10" r="10" fill="#666" /><path d="M8.300 3.500h3.400l-.6 8.500H8.900z" fill="#fff" /><circle cx="10" cy="15" r="1.700" fill="#fff" /></svg>
        </div>
      </div>
      <GridDialog />
      <svg width="54" height="48" viewBox="0 0 54 48" className="absolute top-[103px] left-[36px]" fill="none" stroke="#ed1c24" strokeWidth="3.500" strokeLinecap="round" strokeLinejoin="round">
        <path d="M9 6C22 4 38 4 50 4 49 12 47 24 47 29c0 6 2 9 3 14-2-2-12-2-20-1C18 43 10 45 2 44 2 34 5 14 9 6" />
      </svg>
    </div>
  );
}
